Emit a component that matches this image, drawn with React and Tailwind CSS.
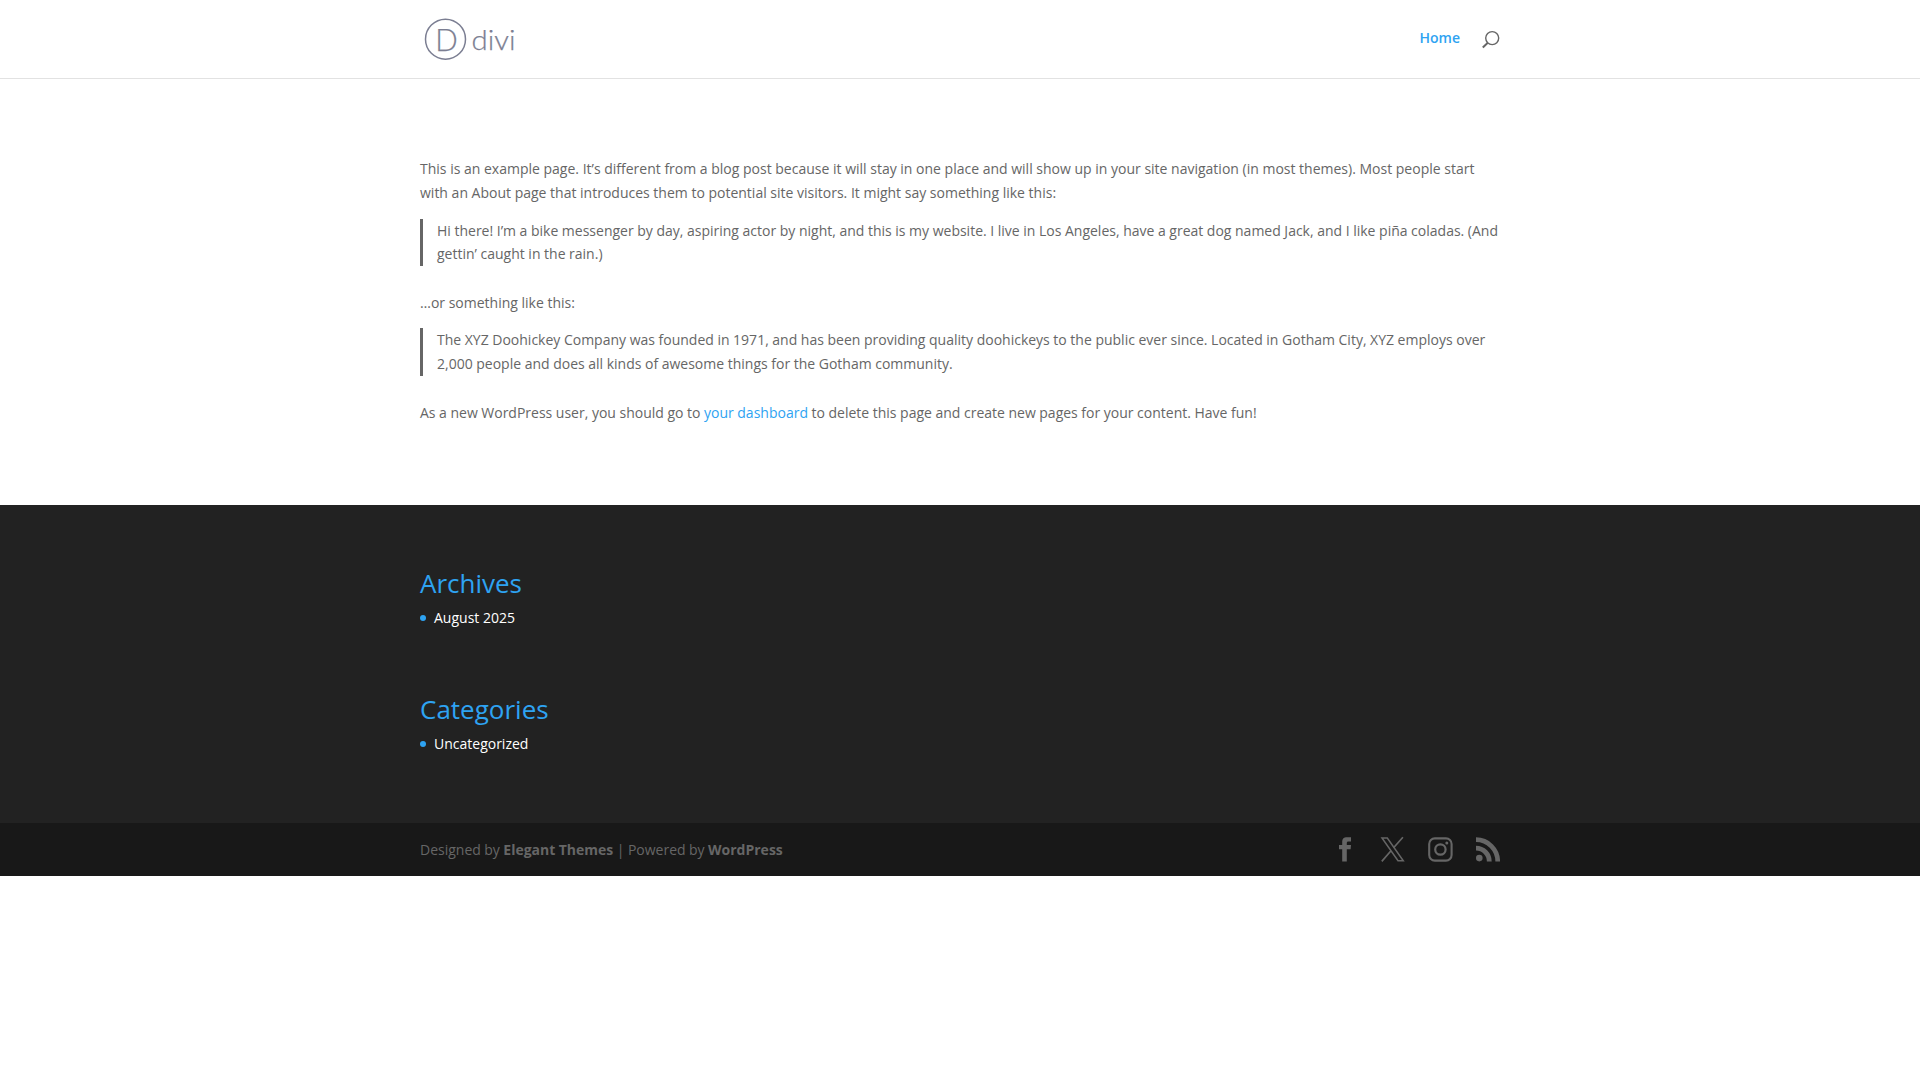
const archives = ['August 2025']
const categories = ['Uncategorized']

function Logo() {
  return (
    <svg width="93" height="43" viewBox="0 0 93 43" className="ml-[4px] block" fill="#7b7e92">
      <circle cx="21.5" cy="21.2" r="20" fill="none" stroke="#7b7e92" strokeWidth="1.5" />
      <g fontFamily="Lato, sans-serif" fontWeight="300" stroke="#7b7e92" strokeWidth="0.25">
        <text x="11.2" y="32.6" fontSize="31" textLength="22.5" lengthAdjust="spacingAndGlyphs">D</text>
        <text x="47.6" y="32.4" fontSize="28" textLength="44" lengthAdjust="spacingAndGlyphs">divi</text>
      </g>
    </svg>
  )
}

function SearchIcon() {
  return (
    <svg width="18" height="19" viewBox="0 0 18 19" fill="none" stroke="#666" className="block">
      <circle cx="10.2" cy="8.1" r="6.5" strokeWidth="1.4" />
      <path d="M5.8 12.7 L0.8 17.4" strokeWidth="2" />
    </svg>
  )
}

function FacebookIcon() {
  return (
    <svg width="24" height="25" viewBox="0 0 24 25" fill="currentColor" className="block">
      <path d="M9.2 24.4V12.3H6V8H9.2V5.2C9.2 1.6 11 0.3 14 0.3H18V4.4H15.6C14.2 4.4 13.8 4.9 13.8 6V8H18L17.6 12.3H13.8V24.4Z" />
    </svg>
  )
}

function XIcon() {
  return (
    <svg width="24" height="25" viewBox="0 0 24 25" fill="none" stroke="currentColor" className="block overflow-visible">
      <path d="M2 1 H7.3 L23.3 23.7 H18 Z" strokeWidth="1.5" />
      <path d="M22.9 0.3 L13.6 10.8 M11 13.8 L1.8 24.4" strokeWidth="1.7" />
    </svg>
  )
}

function InstagramIcon() {
  return (
    <svg width="25" height="25" viewBox="0 0 25 25" fill="none" stroke="currentColor" className="block">
      <rect x="1.2" y="1.4" width="22.4" height="22.2" rx="5.6" strokeWidth="2.1" />
      <circle cx="12.4" cy="12.5" r="5.2" strokeWidth="2.2" />
      <circle cx="18.8" cy="6" r="1.5" fill="currentColor" stroke="none" />
    </svg>
  )
}

function RssIcon() {
  return (
    <svg width="24" height="25" viewBox="0 0 24 25" fill="none" stroke="currentColor" className="block">
      <circle cx="3.3" cy="21.1" r="3.3" fill="currentColor" stroke="none" />
      <path d="M0 11.1 A13.3 13.3 0 0 1 13.3 24.4" strokeWidth="4.8" />
      <path d="M0 2.7 A21.7 21.7 0 0 1 21.7 24.4" strokeWidth="4.7" />
    </svg>
  )
}

function Quote({ children }) {
  return (
    <blockquote className="mt-[14px] mb-[24.4px] border-l-[3px] border-[#666] pl-[14px] [word-spacing:-0.05px]">{children}</blockquote>
  )
}

function Widget({ title, items }) {
  return (
    <div>
      <h4 className="pb-[10px] text-[26px] leading-[26px] font-normal text-[#2ea3f2]">{title}</h4>
      <ul>
        {items.map(item => (
          <li key={item} className="flex items-center gap-[8px] leading-[24px]">
            <span className="size-[6px] rounded-full bg-[#2ea3f2]" />
            <a href="#" className="text-white">{item}</a>
          </li>
        ))}
      </ul>
    </div>
  )
}

export default function App() {
  return (
    <div className="min-h-screen bg-white font-['Open_Sans',sans-serif] text-[14px] leading-[23.8px] font-normal text-[#666] antialiased">
      <header className="h-[79px] border-b border-[#e2e2e2]">
        <div className="mx-auto flex w-[1080px] items-start justify-between">
          <a href="#" className="pt-[18px]"><Logo /></a>
          <nav className="flex items-start">
            <a href="#" className="pt-[26px] font-semibold text-[#2ea3f2]">Home</a>
            <button className="mt-[30px] ml-[22px]"><SearchIcon /></button>
          </nav>
        </div>
      </header>

      <main className="mx-auto h-[426px] w-[1080px] pt-[78px]">
        <p>
          This is an example page. It’s different from a blog post because it will stay in one place and will show up in your site navigation (in most themes). Most people start with an About page that introduces them to potential site visitors. It might say something like this:
        </p>
        <Quote>
          Hi there! I’m a bike messenger by day, aspiring actor by night, and this is my website. I live in Los Angeles, have a great dog named Jack, and I like piña coladas. (And gettin’ caught in the rain.)
        </Quote>
        <p>…or something like this:</p>
        <Quote>
          The XYZ Doohickey Company was founded in 1971, and has been providing quality doohickeys to the public ever since. Located in Gotham City, XYZ employs over 2,000 people and does all kinds of awesome things for the Gotham community.
        </Quote>
        <p className="pt-[0.5px] [word-spacing:-0.07px]">
          As a new WordPress user, you should go to <a href="#" className="text-[#2ea3f2]">your dashboard</a> to delete this page and create new pages for your content. Have fun!
        </p>
      </main>

      <footer>
        <div className="h-[318px] bg-[#222] pt-[65px]">
          <div className="mx-auto flex w-[1080px] flex-col gap-[66px]">
            <Widget title="Archives" items={archives} />
            <Widget title="Categories" items={categories} />
          </div>
        </div>
        <div className="h-[53px] bg-[#181818]">
          <div className="mx-auto flex w-[1080px] items-start justify-between pt-[14px]">
            <p className="pt-px [word-spacing:-0.2px]">
              Designed by <a href="#" className="font-bold">Elegant Themes</a> | Powered by <a href="#" className="font-bold">WordPress</a>
            </p>
            <div className="flex gap-[23.5px]">
              <FacebookIcon />
              <XIcon />
              <InstagramIcon />
              <RssIcon />
            </div>
          </div>
        </div>
      </footer>
    </div>
  )
}
